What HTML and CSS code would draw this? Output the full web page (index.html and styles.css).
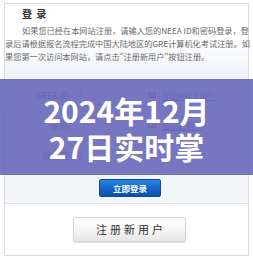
FILE: index.html
```html
<!DOCTYPE html>
<html lang="zh-CN">
<head>
<meta charset="utf-8">
<title>登录</title>
<link rel="stylesheet" href="styles.css">
</head>
<body>
<div class="panel">
  <div class="intro">
    <h2 class="heading">登 录</h2>
    <p class="desc"><span class="line indent">如果您已经在本网站注册，请输入您的NEEA ID和密码登录，登</span><span class="line">录后请根据报名流程完成中国大陆地区的GRE计算机化考试注册。如</span><span class="line">果您第一次访问本网站，请点击"注册新用户"按钮注册。</span></p>
  </div>
  <div class="form">
    <div class="row">
      <span class="label">NEEA ID</span>
      <span class="input"><svg class="kbd" width="8" height="6" viewBox="0 0 8 6"><rect x="0.5" y="0.5" width="7" height="5" fill="#e8e8e8" stroke="#666"/><path d="M2 2h1M4 2h1M6 2h0.5M2 4h4" stroke="#666" stroke-width="1"/></svg></span>
      <a class="link" href="#">忘记NEEA ID？</a>
    </div>
    <div class="row">
      <span class="label">密码</span>
      <span class="input"><svg class="kbd" width="8" height="6" viewBox="0 0 8 6"><rect x="0.5" y="0.5" width="7" height="5" fill="#e8e8e8" stroke="#666"/><path d="M2 2h1M4 2h1M6 2h0.5M2 4h4" stroke="#666" stroke-width="1"/></svg></span>
      <a class="link" href="#">忘记密码？</a>
    </div>
    <div class="row">
      <span class="label">验证码</span>
      <span class="input short"></span>
      <span></span>
    </div>
    <div class="actions"><button class="btn-primary" type="button">立即登录</button></div>
  </div>
  <div class="register"><button class="btn-secondary" type="button">注册新用户</button></div>
</div>
<div class="band"><h1 class="band-title">2024年12月27日实时掌</h1></div>
</body>
</html>
```
FILE: styles.css
```css
html, body {
  margin: 0;
  padding: 0;
  background: #ffffff;
}
body {
  width: 253px;
  height: 257px;
  overflow: hidden;
  position: relative;
  font-family: "Noto Sans CJK SC", "Liberation Sans", sans-serif;
}
.panel {
  margin: 3px 4px 0 4px;
  border: 1px solid #d5dae3;
  background: #ffffff;
}
.intro {
  padding: 2px 0 17px 0;
  background: linear-gradient(#ffffff 0%, #ffffff 45%, #eef1f6 100%);
}
.heading {
  margin: 0 0 3px 17px;
  font-size: 10px;
  line-height: 15px;
  font-weight: bold;
  letter-spacing: 1px;
  color: #333333;
}
.desc {
  margin: 0;
  font-size: 8.2px;
  line-height: 13px;
  color: #6a6a6a;
}
.line {
  display: block;
  white-space: nowrap;
}
.indent {
  padding-left: 17px;
}
.form {
  padding: 5px 0 6px 0;
  background: linear-gradient(#eef1f6 0%, #f3f5f9 100%);
  display: flex;
  flex-direction: column;
  gap: 10px;
}
.row {
  display: grid;
  grid-template-columns: 63px 80px auto;
  column-gap: 12px;
  align-items: center;
  height: 20px;
}
.row .link {
  margin-left: -10px;
}
.label {
  text-align: right;
  font-size: 8.5px;
  color: #555555;
}
.input {
  height: 20px;
  box-sizing: border-box;
  border: 1px solid #c9ced8;
  background: #ffffff;
  display: flex;
  align-items: center;
  justify-content: flex-end;
  padding-right: 3px;
}
.input.short {
  width: 66px;
}
.link {
  font-size: 8px;
  color: #3366bb;
  text-decoration: underline;
  white-space: nowrap;
}
.actions {
  margin-top: 4px;
  display: flex;
  justify-content: center;
}
.btn-primary {
  width: 62px;
  height: 18px;
  margin-left: 7px;
  padding: 0;
  border: 1px solid #0b4b9c;
  border-radius: 2px;
  background: linear-gradient(#2a86e0 0%, #1467c8 50%, #0a52ad 100%);
  color: #ffffff;
  font-family: "Noto Sans CJK SC", sans-serif;
  font-size: 8.5px;
  font-weight: bold;
  line-height: 16px;
}
.register {
  border-top: 1px solid #dde1e8;
  padding: 13px 0 13px 0;
  display: flex;
  justify-content: center;
  background: #ffffff;
}
.btn-secondary {
  width: 113px;
  height: 25px;
  margin-left: 6px;
  padding: 0 0 0 3px;
  border: 1px solid #d3d3d3;
  border-radius: 2px;
  background: linear-gradient(#ffffff 0%, #f6f6f6 50%, #e6e6e6 100%);
  box-shadow: 0 1px 1px rgba(0, 0, 0, 0.12);
  color: #333333;
  font-family: "Noto Sans CJK SC", sans-serif;
  font-size: 11px;
  letter-spacing: 3px;
  line-height: 23px;
}
.band {
  position: absolute;
  left: 0;
  top: 79px;
  width: 253px;
  height: 96px;
  box-sizing: border-box;
  padding-top: 13px;
  background: rgba(104, 104, 186, 0.9);
  overflow: hidden;
}
.band-title {
  width: 172px;
  margin: 0 auto;
  text-align: center;
  color: #ffffff;
  font-family: "Noto Sans CJK SC", sans-serif;
  font-size: 30px;
  font-weight: bold;
  line-height: 36px;
}
```
